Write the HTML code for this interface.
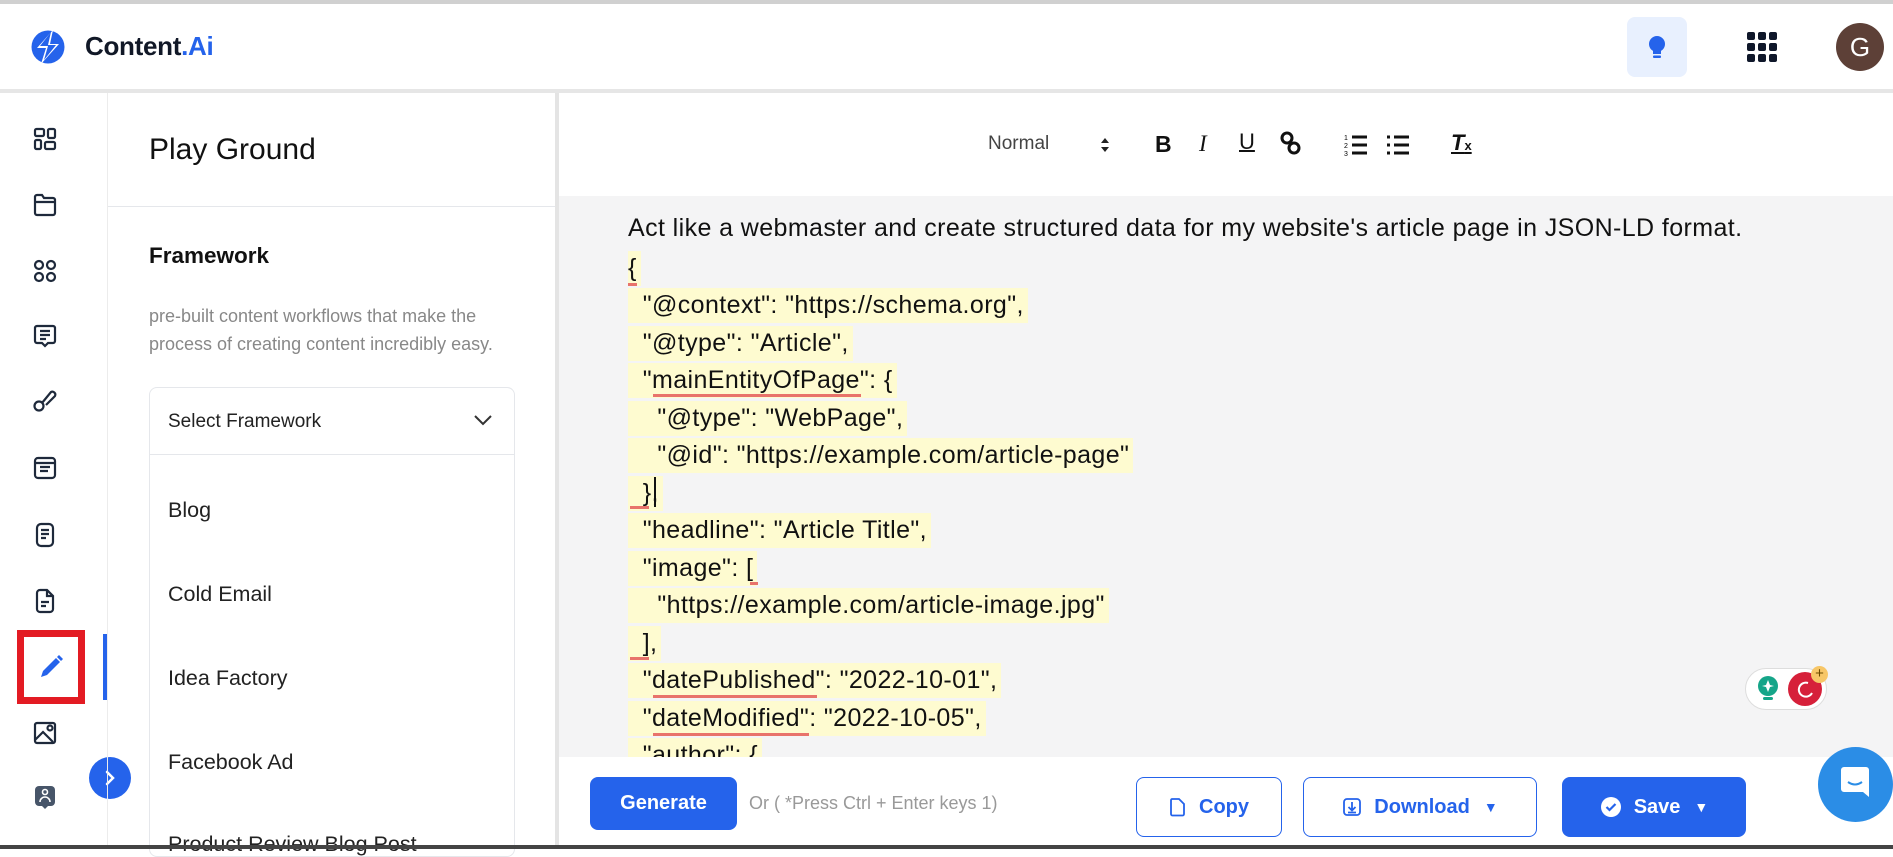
<!DOCTYPE html>
<html><head><meta charset="utf-8"><style>
*{box-sizing:border-box;margin:0;padding:0}
body{width:1893px;height:849px;overflow:hidden;background:#fff;font-family:"Liberation Sans",sans-serif;position:relative;color:#111}
.abs{position:absolute}
.topline{left:0;top:0;width:1893px;height:4px;background:#d0d0d0}
.hdrline{left:0;top:89px;width:1893px;height:4px;background:#e6e6e6}
.ico{position:absolute;left:32px;width:26px;height:26px}
.panel-sep{left:107px;top:93px;width:1px;height:756px;background:#ececec}
.vsep{left:555px;top:93px;width:4px;height:756px;background:#e4e4e4}
.editor-bg{left:559px;top:196px;width:1334px;height:562px;background:#f4f4f5}
.line{position:absolute;left:628px;height:35px;line-height:35px;font-size:25px;letter-spacing:0.4px;background:#fefbd0;white-space:pre;color:#111;padding-right:4px}
.ul{position:absolute;height:3px;background:#e8736b}
.item{position:absolute;left:168px;font-size:21.5px;color:#222}
.btn{position:absolute;border-radius:8px;font-size:20px;display:flex;align-items:center;justify-content:center;font-weight:bold}
</style></head><body>
<div class="abs topline"></div>
<svg class="abs" style="left:31px;top:28px" width="34" height="38" viewBox="0 0 34 38">
<circle cx="17" cy="19" r="16.5" fill="#2563eb"/>
<path d="M22 2 L6 20 L15 20 L10 36 L28 16 L19 16 Z" fill="#fff"/>
<path d="M20 4 L9 18 L17 18 L13 32 L25 17 L17 17 Z" fill="#2563eb"/>
</svg>
<div class="abs" style="left:85px;top:31px;font-size:26px;font-weight:bold;color:#111827;letter-spacing:-0.3px">Content<span style="color:#2563eb">.Ai</span></div>
<div class="abs" style="left:1627px;top:17px;width:60px;height:60px;border-radius:8px;background:#e8f0fe"></div>
<svg class="abs" style="left:1645px;top:33px" width="24" height="30" viewBox="0 0 24 30"><circle cx="12" cy="11" r="8" fill="#2563eb"/><rect x="8" y="16" width="8" height="5" fill="#2563eb"/><rect x="8" y="22.5" width="8" height="2.5" rx="1" fill="#2563eb"/></svg>
<svg class="abs" style="left:1747px;top:32px" width="30" height="30" viewBox="0 0 30 30" fill="#0f172a">
<rect x="0" y="0" width="8" height="8" rx="2"/><rect x="11" y="0" width="8" height="8" rx="2"/><rect x="22" y="0" width="8" height="8" rx="2"/>
<rect x="0" y="11" width="8" height="8" rx="2"/><rect x="11" y="11" width="8" height="8" rx="2"/><rect x="22" y="11" width="8" height="8" rx="2"/>
<rect x="0" y="22" width="8" height="8" rx="2"/><rect x="11" y="22" width="8" height="8" rx="2"/><rect x="22" y="22" width="8" height="8" rx="2"/></svg>
<div class="abs" style="left:1836px;top:23px;width:48px;height:48px;border-radius:50%;background:#5d4037;color:#fff;font-size:26px;text-align:center;line-height:48px">G</div>
<div class="abs hdrline"></div>

<svg class="ico" style="top:126px" viewBox="0 0 26 26" fill="none" stroke="#1e293b" stroke-width="2.2"><rect x="3" y="3" width="9" height="7" rx="1.5"/><rect x="16" y="3" width="7" height="9" rx="1.5"/><rect x="3" y="14" width="6" height="9" rx="1.5"/><rect x="13" y="16" width="10" height="7" rx="1.5"/></svg>
<svg class="ico" style="top:192px" viewBox="0 0 26 26" fill="none" stroke="#1e293b" stroke-width="2.2"><path d="M3 8 V5 a2 2 0 0 1 2-2 h5 l2 3 h9 a2 2 0 0 1 2 2 v13 a2 2 0 0 1-2 2 H5 a2 2 0 0 1-2-2 Z M3 10 H23"/></svg>
<svg class="ico" style="top:258px" viewBox="0 0 26 26" fill="none" stroke="#1e293b" stroke-width="2.2"><rect x="3" y="3" width="8" height="8" rx="4"/><rect x="15" y="3" width="8" height="8" rx="4"/><rect x="3" y="15" width="8" height="8" rx="4"/><rect x="15" y="15" width="8" height="8" rx="4"/></svg>
<svg class="ico" style="top:323px" viewBox="0 0 26 26" fill="none" stroke="#1e293b" stroke-width="2.2"><path d="M5 3 h16 a2 2 0 0 1 2 2 v13 a2 2 0 0 1-2 2 h-5 l-3 3 l-3-3 H5 a2 2 0 0 1-2-2 V5 a2 2 0 0 1 2-2 Z M8 8 h10 M8 12 h10 M8 16 h6"/></svg>
<svg class="ico" style="top:387px" viewBox="0 0 26 26" fill="none" stroke="#1e293b" stroke-width="2.2"><circle cx="7" cy="19" r="4.5"/><path d="M10 16 L19 5 a3 3 0 0 1 4 4 L14 18"/></svg>
<svg class="ico" style="top:455px" viewBox="0 0 26 26" fill="none" stroke="#1e293b" stroke-width="2.2"><rect x="3" y="3" width="20" height="20" rx="3"/><path d="M3 8 H23 M8 12 h10 M8 16 h8"/></svg>
<svg class="ico" style="top:522px" viewBox="0 0 26 26" fill="none" stroke="#1e293b" stroke-width="2.2"><rect x="5" y="2" width="16" height="22" rx="4"/><path d="M9 8 h8 M9 12 h8 M9 16 h5"/></svg>
<svg class="ico" style="top:588px" viewBox="0 0 26 26" fill="none" stroke="#1e293b" stroke-width="2.2"><path d="M5 5 a3 3 0 0 1 3-3 h7 l6 6 v13 a3 3 0 0 1-3 3 H8 a3 3 0 0 1-3-3 Z M15 2 v6 h6 M9 14 h8 M9 18 h5"/></svg>
<div class="abs" style="left:17px;top:630px;width:68px;height:74px;border:7px solid #e31b23"></div>
<svg class="abs" style="left:37px;top:653px" width="28" height="28" viewBox="0 0 28 28"><path d="M4 24 L6 18 L19 5 L23 9 L10 22 Z" fill="#2563eb"/><path d="M20 4 L22 2 L26 6 L24 8 Z" fill="#2563eb"/></svg>
<div class="abs" style="left:103px;top:634px;width:4px;height:66px;background:#2563eb"></div>
<svg class="ico" style="top:720px" viewBox="0 0 26 26" fill="none" stroke="#1e293b" stroke-width="2.2"><rect x="3" y="3" width="20" height="20" rx="2"/><path d="M3 20 L11 12 L21 22"/><circle cx="18" cy="8" r="2.5"/></svg>
<svg class="ico" style="top:784px" viewBox="0 0 26 26"><rect x="3" y="2" width="20" height="20" rx="4" fill="#475569"/><path d="M10 22 L13 25 L16 22 Z" fill="#475569"/><circle cx="13" cy="8" r="2.5" fill="none" stroke="#fff" stroke-width="1.6"/><path d="M8 18 a5 5 0 0 1 10 0" fill="none" stroke="#fff" stroke-width="1.6"/></svg>
<div class="abs" style="left:89px;top:757px;width:42px;height:42px;border-radius:50%;background:#2563eb"></div>
<svg class="abs" style="left:103px;top:769px" width="14" height="18" viewBox="0 0 14 18"><path d="M4 3 L10 9 L4 15" fill="none" stroke="#fff" stroke-width="2.5" stroke-linecap="round"/></svg>

<div class="abs panel-sep"></div>
<div class="abs" style="left:149px;top:133px;font-size:30px;color:#111">Play Ground</div>
<div class="abs" style="left:108px;top:206px;width:447px;height:1px;background:#e5e7eb"></div>
<div class="abs" style="left:149px;top:243px;font-size:22.5px;font-weight:bold;color:#111">Framework</div>
<div class="abs" style="left:149px;top:302px;font-size:18px;line-height:28px;color:#888">pre-built content workflows that make the<br>process of creating content incredibly easy.</div>
<div class="abs" style="left:149px;top:387px;width:366px;height:470px;border:1px solid #e5e7eb;border-radius:8px"></div>
<div class="abs" style="left:150px;top:454px;width:364px;height:1px;background:#e5e7eb"></div>
<div class="abs" style="left:168px;top:411px;font-size:19px;color:#222">Select Framework</div>
<svg class="abs" style="left:473px;top:413px" width="20" height="14" viewBox="0 0 20 14"><path d="M2 3 L10 11 L18 3" fill="none" stroke="#333" stroke-width="2"/></svg>
<div class="item" style="top:498px">Blog</div>
<div class="item" style="top:582px">Cold Email</div>
<div class="item" style="top:666px">Idea Factory</div>
<div class="item" style="top:750px">Facebook Ad</div>
<div class="item" style="top:832px">Product Review Blog Post</div>

<div class="abs vsep"></div>
<div class="abs editor-bg"></div>
<div class="abs" style="left:988px;top:133px;font-size:19px;color:#444">Normal</div>
<svg class="abs" style="left:1099px;top:135px" width="12" height="20" viewBox="0 0 12 20"><path d="M2 8 L6 3 L10 8 Z M2 12 L6 17 L10 12 Z" fill="#222"/></svg>
<div class="abs" style="left:1155px;top:131px;font-size:23px;font-weight:bold">B</div>
<div class="abs" style="left:1199px;top:131px;font-size:23px;font-style:italic;font-family:'Liberation Serif',serif">I</div>
<div class="abs" style="left:1239px;top:129px;font-size:22px;text-decoration:underline;text-decoration-thickness:2px">U</div>
<svg class="abs" style="left:1279px;top:131px" width="24" height="26" viewBox="0 0 24 26" fill="none" stroke="#111" stroke-width="3"><rect x="3" y="2" width="10" height="10" rx="5" transform="rotate(35 8 7)"/><rect x="10" y="12" width="10" height="10" rx="5" transform="rotate(35 15 17)"/></svg>
<svg class="abs" style="left:1344px;top:133px" width="24" height="24" viewBox="0 0 24 24"><g stroke="#111" stroke-width="3"><path d="M8 4 H23 M8 12 H23 M8 20 H23"/></g><text x="0" y="7" font-size="7" font-family="Liberation Sans">1</text><text x="0" y="15" font-size="7" font-family="Liberation Sans">2</text><text x="0" y="23" font-size="7" font-family="Liberation Sans">3</text></svg>
<svg class="abs" style="left:1386px;top:133px" width="24" height="24" viewBox="0 0 24 24"><g stroke="#111" stroke-width="3"><path d="M8 4 H23 M8 12 H23 M8 20 H23 M1 4 H4 M1 12 H4 M1 20 H4"/></g></svg>
<div class="abs" style="left:1451px;top:130px;font-size:22px;font-style:italic;font-weight:bold;text-decoration:underline">T<span style="font-size:13px;font-style:normal">x</span></div>

<div class="abs" style="left:628px;top:214px;font-size:25px;letter-spacing:0.4px;color:#111;white-space:pre">Act like a webmaster and create structured data for my website's article page in JSON-LD format.</div>
<div class="line" style="top:251px">{</div>
<div class="line" style="top:288px">  "@context": "https://schema.org",</div>
<div class="line" style="top:326px">  "@type": "Article",</div>
<div class="line" style="top:363px">  "mainEntityOfPage": {</div>
<div class="line" style="top:401px">    "@type": "WebPage",</div>
<div class="line" style="top:438px">    "@id": "https://example.com/article-page"</div>
<div class="line" style="top:476px">  },</div>
<div class="line" style="top:513px">  "headline": "Article Title",</div>
<div class="line" style="top:551px">  "image": [</div>
<div class="line" style="top:588px">    "https://example.com/article-image.jpg"</div>
<div class="line" style="top:626px">  ],</div>
<div class="line" style="top:663px">  "datePublished": "2022-10-01",</div>
<div class="line" style="top:701px">  "dateModified": "2022-10-05",</div>
<div class="line" style="top:738px">  "author": {</div>
<div class="abs" style="left:654px;top:477px;width:2px;height:30px;background:#111"></div>
<div class="ul" style="left:628px;top:283px;width:9px"></div>
<div class="ul" style="left:653px;top:394px;width:208px"></div>
<div class="ul" style="left:851px;top:394px;width:9px"></div>
<div class="ul" style="left:630px;top:506px;width:19px"></div>
<div class="ul" style="left:750px;top:582px;width:8px"></div>
<div class="ul" style="left:630px;top:657px;width:19px"></div>
<div class="ul" style="left:653px;top:695px;width:164px"></div>
<div class="ul" style="left:653px;top:733px;width:156px"></div>

<div class="abs" style="left:1745px;top:668px;width:82px;height:42px;border-radius:21px;background:#fff;border:1px solid #ddd"></div>
<svg class="abs" style="left:1756px;top:674px" width="24" height="30" viewBox="0 0 24 30"><circle cx="12" cy="12" r="10" fill="#15a589"/><rect x="7" y="23" width="10" height="3" rx="1.5" fill="#15a589"/><path d="M12 6 L14 11 L18 12 L14 13 L12 18 L10 13 L6 12 L10 11Z" fill="#fff"/></svg>
<div class="abs" style="left:1788px;top:672px;width:34px;height:34px;border-radius:50%;background:#d6203a"></div>
<svg class="abs" style="left:1796px;top:680px" width="18" height="18" viewBox="0 0 18 18"><path d="M12 3 A7 7 0 1 0 16 13" fill="none" stroke="#fff" stroke-width="2"/></svg>
<div class="abs" style="left:1811px;top:666px;width:17px;height:17px;border-radius:50%;background:#f7c667;font-size:15px;line-height:16px;text-align:center;color:#6b4a00">+</div>

<div class="abs" style="left:559px;top:757px;width:1334px;height:88px;background:#fff"></div>
<div class="btn" style="left:590px;top:777px;width:147px;height:53px;background:#2563eb;color:#fff">Generate</div>
<div class="abs" style="left:749px;top:793px;font-size:18px;color:#999">Or ( *Press Ctrl + Enter keys 1)</div>
<div class="btn" style="left:1136px;top:777px;width:146px;height:60px;border:1.5px solid #2563eb;color:#2563eb;background:#fff">
<svg width="18" height="20" viewBox="0 0 18 20" style="margin-right:12px"><path d="M3 2 h7 l5 5 v10 a1.5 1.5 0 0 1-1.5 1.5 h-10 a1.5 1.5 0 0 1-1.5-1.5 V3.5 A1.5 1.5 0 0 1 3 2Z" fill="none" stroke="#2563eb" stroke-width="1.8"/></svg>Copy</div>
<div class="btn" style="left:1303px;top:777px;width:234px;height:60px;border:1.5px solid #2563eb;color:#2563eb;background:#fff">
<svg width="20" height="20" viewBox="0 0 20 20" style="margin-right:12px"><rect x="2" y="2" width="16" height="16" rx="3" fill="none" stroke="#2563eb" stroke-width="1.8"/><path d="M10 5 v8 M6.5 10 L10 13.5 L13.5 10 M6 15.5 h8" fill="none" stroke="#2563eb" stroke-width="1.8"/></svg>Download<span style="font-size:14px;margin-left:14px">▼</span></div>
<div class="btn" style="left:1562px;top:777px;width:184px;height:60px;background:#2563eb;color:#fff">
<svg width="22" height="22" viewBox="0 0 22 22" style="margin-right:12px"><circle cx="11" cy="11" r="10" fill="#fff"/><path d="M6.5 11 L9.5 14 L15.5 8" fill="none" stroke="#2563eb" stroke-width="2.2"/></svg>Save<span style="font-size:14px;margin-left:14px">▼</span></div>
<div class="abs" style="left:1818px;top:747px;width:75px;height:75px;border-radius:50%;background:#2b8de6"></div>
<svg class="abs" style="left:1840px;top:765px" width="30" height="34" viewBox="0 0 30 34"><path d="M4 2 h22 a3 3 0 0 1 3 3 v27 l-6-5 H4 a3 3 0 0 1-3-3 V5 a3 3 0 0 1 3-3Z" fill="#fff"/><path d="M8 17 q7 5 14 0" fill="none" stroke="#2b8de6" stroke-width="2"/></svg>
<div class="abs" style="left:0;top:845px;width:1893px;height:4px;background:#444"></div>
</body></html>
